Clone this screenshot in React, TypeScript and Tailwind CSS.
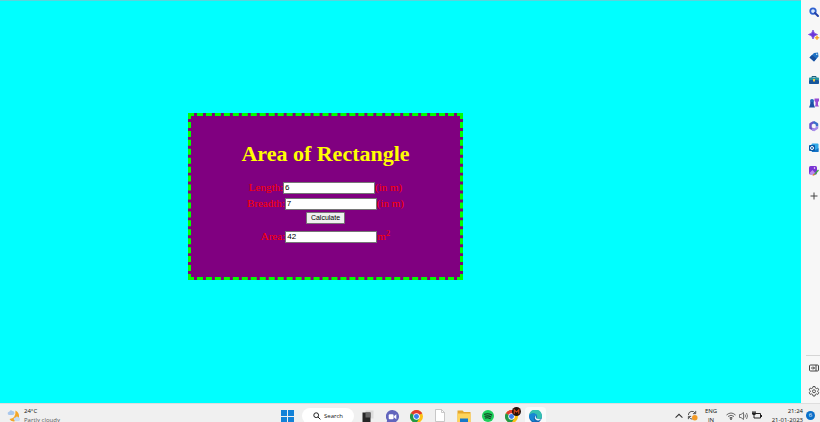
import type { FormEvent, ReactNode } from 'react';
import { useState } from 'react';

type IconProps = { children: ReactNode; label: string };

function SideButton({ children, label }: IconProps) {
  return (
    <button type="button" aria-label={label} className="flex h-[22px] w-3 items-center justify-center">
      <svg viewBox="0 0 20 20" className="size-[10px] shrink-0 overflow-visible" aria-hidden="true">
        {children}
      </svg>
    </button>
  );
}

function Sidebar() {
  return (
    <aside className="flex w-[19px] shrink-0 flex-col items-end justify-between bg-[#f7f7f7]">
      <nav className="flex flex-col gap-[3px] pt-px" aria-label="Tools">
        <div className="flex h-[181px] flex-col justify-between">
          <SideButton label="Search">
            <circle cx="8" cy="8" r="5.5" fill="#d5e6fb" stroke="#2f62cf" strokeWidth="3.500" />
            <path d="M12 12l6 6" stroke="#2342a8" strokeWidth="4" strokeLinecap="round" />
          </SideButton>
          <SideButton label="Discover">
            <path d="M8 0q1 8 9 9q-8 1-9 9q-1-8-9-9q8-1 9-9z" fill="#6b35d9" stroke="#6b35d9" strokeWidth="1.5" />
            <path d="M16 11q.6 4 4.5 4.500q-4 .6-4.500 4.500q-.6-4-4.500-4.500q4-.5 4.500-4.500z" fill="#f5a623" stroke="#f5a623" />
          </SideButton>
          <SideButton label="Shopping">
            <path d="M10 2l8-1 1 8-9 10-9-8z" fill="#1f72c4" />
            <path d="M1 11l5-5 9 7-5 6z" fill="#174f9e" />
            <circle cx="15.500" cy="4.500" r="1.500" fill="#d9efff" />
          </SideButton>
          <SideButton label="Toolbox">
            <path d="M6 6V3h8v3" fill="none" stroke="#1c5c7d" strokeWidth="2" />
            <rect x="0" y="5" width="20" height="6" rx="1.500" fill="#2694a0" />
            <rect x="0" y="10" width="20" height="8" rx="1.500" fill="#17569c" />
            <rect x="8" y="8" width="4" height="5" fill="#f0c443" />
          </SideButton>
          <SideButton label="Games">
            <circle cx="6" cy="6" r="4" fill="#2467bd" />
            <path d="M3 8h6l1 6 2 5H0l2-5z" fill="#1c4fa6" />
            <path d="M11 1h9v5l-2 2v6l2 3h-8l1-4V8l-2-2z" fill="#9a4bd3" />
          </SideButton>
          <SideButton label="Microsoft 365">
            <path d="M10 2L3 6v8l7 4" fill="none" stroke="#6a55c9" strokeWidth="5" strokeLinejoin="round" />
            <path d="M9 2l7 4v5" fill="none" stroke="#3a70c9" strokeWidth="5" strokeLinejoin="round" />
            <path d="M16 11v3l-6 4-4-2" fill="none" stroke="#a78be9" strokeWidth="5" strokeLinejoin="round" />
          </SideButton>
          <SideButton label="Outlook">
            <rect x="5" y="1" width="14" height="17" rx="2" fill="#32a9e8" />
            <path d="M6 10l7 4 6-4v8H6z" fill="#1373c7" />
            <rect x="0" y="4" width="12" height="12" rx="2" fill="#0b59a6" />
            <circle cx="6" cy="10" r="3" fill="none" stroke="#fff" strokeWidth="2" />
          </SideButton>
          <SideButton label="Image designer">
            <rect x="0" y="0" width="16" height="17" rx="3" fill="#7b35d3" />
            <path d="M1 14l6-6 7 8H3z" fill="#bb8cf0" />
            <circle cx="11" cy="4" r="1.500" fill="#fff" />
            <path d="M9 17l9-10 2 2-8 9z" fill="#42a84a" />
            <path d="M7 20l2-5 3 3z" fill="#e87b35" />
          </SideButton>
        </div>
        <SideButton label="Add">
          <path d="M10 3v14M3 10h14" stroke="#444" strokeWidth="2" />
        </SideButton>
      </nav>
      <div className="flex w-[14px] flex-col items-end gap-px border-t border-[#d5d5d5] pt-px pb-px">
        <SideButton label="Hide sidebar">
          <rect x="1" y="4" width="18" height="12" rx="2" fill="none" stroke="#444" strokeWidth="2" />
          <path d="M14 4v12M4 10h7M8 7l3 3-3 3" fill="none" stroke="#444" strokeWidth="2" />
        </SideButton>
        <SideButton label="Settings">
          <path
            d="M8 1h4l.6 3 2 1.200 3-1 2 3.500-2.300 2v1.600l2.300 2-2 3.500-3-1-2 1.200-.6 3H8l-.6-3-2-1.200-3 1-2-3.500 2.300-2V9.700l-2.300-2 2-3.500 3 1 2-1.200z"
            fill="none"
            stroke="#444"
            strokeWidth="1.800"
            strokeLinejoin="round"
          />
          <circle cx="10" cy="10.500" r="3" fill="none" stroke="#444" strokeWidth="1.800" />
        </SideButton>
      </div>
    </aside>
  );
}

function ChromeLogo() {
  return (
    <svg viewBox="0 0 24 24" className="size-[13px] shrink-0" aria-hidden="true">
      <circle cx="12" cy="12" r="12" fill="#fbc116" />
      <path d="M12 12L1.600 6A12 12 0 0 1 22.400 6z" fill="#e33b2e" />
      <path d="M1.600 6A12 12 0 0 0 12 24l5.200-9L12 12z" fill="#229a48" />
      <path d="M12 6h10.400" stroke="#e33b2e" strokeWidth="1" />
      <circle cx="12" cy="12" r="6" fill="#fff" />
      <circle cx="12" cy="12" r="4.600" fill="#3b7ded" />
    </svg>
  );
}

function Taskbar() {
  return (
    <footer className="flex h-[19px] shrink-0 items-start overflow-hidden border-t border-[#dedede] bg-[#f0f0f0] font-['Open_Sans',sans-serif] text-[6px] leading-[9px] text-[#111]">
      <button type="button" className="flex w-[281px] gap-[3px] pt-[3px] pl-[7px] text-left">
        <svg viewBox="0 0 28 28" className="mt-[2px] size-[14px]" aria-hidden="true">
          <path d="M17 3q8 4 7 13q-2 8-11 9q-6-1-8-5q13-1 12-17z" fill="#f3a629" />
          <path d="M2 11q-2-5 3-6q2-4 6-1q4 0 4 4t-4 4H4z" fill="#a9c8ed" />
          <path d="M14 22q-2-5 3-5q3-4 6 0q4 0 3 4t-4 3h-6z" fill="#c6dcf5" />
        </svg>
        <span>
          <span className="block">24°C</span>
          <span className="block text-[#555]">Partly cloudy</span>
        </span>
      </button>
      <nav className="flex items-start pt-[4px]" aria-label="Taskbar">
        <button type="button" aria-label="Start" className="pt-[2px]">
          <svg viewBox="0 0 26 26" className="size-[13px]" aria-hidden="true">
            <path d="M0 0h12v12H0zM14 0h12v12H14zM0 14h12v12H0zM14 14h12v12H14z" fill="#1382d8" />
          </svg>
        </button>
        <button type="button" className="ml-2 flex h-4 w-[52px] items-center rounded-full bg-white pl-[11px]">
          <svg viewBox="0 0 20 20" className="mr-[3px] size-[8px]" aria-hidden="true">
            <circle cx="8" cy="8" r="6" fill="none" stroke="#222" strokeWidth="2.500" />
            <path d="M12.500 12.500l6 6" stroke="#222" strokeWidth="2.500" />
          </svg>
          Search
        </button>
        <button type="button" aria-label="Task view" className="ml-2 pt-[2px]">
          <svg viewBox="0 0 24 24" className="size-[12px]" aria-hidden="true">
            <path d="M7 1h16v16H7z" fill="#dcdcdc" />
            <path d="M1 5h16v19H1z" fill="#262626" />
            <path d="M7 5h10v10H7z" fill="#666" />
          </svg>
        </button>
        <button type="button" aria-label="Chat" className="ml-3 pt-[2px]">
          <svg viewBox="0 0 24 24" className="size-[13px]" aria-hidden="true">
            <path d="M12 0a12 12 0 1 1-6 22.400L1 24l1-5A12 12 0 0 1 12 0z" fill="#6265bd" />
            <rect x="5" y="8" width="9" height="9" rx="2" fill="#fff" />
            <path d="M15 11l4-3v9l-4-3z" fill="#fff" />
          </svg>
        </button>
        <button type="button" aria-label="Chrome" className="ml-[11px] pt-[2px]">
          <ChromeLogo />
        </button>
        <button type="button" aria-label="Document" className="ml-3 pt-px">
          <svg viewBox="0 0 20 26" className="h-[13px] w-[10px]" aria-hidden="true">
            <path d="M1 1h12l6 6v18H1z" fill="#fff" stroke="#b8b8b8" strokeWidth="1.500" />
            <path d="M13 1v6h6" fill="none" stroke="#b8b8b8" strokeWidth="1.500" />
          </svg>
        </button>
        <button type="button" aria-label="File Explorer" className="ml-3 pt-[2px]">
          <svg viewBox="0 0 28 24" className="h-3 w-[14px]" aria-hidden="true">
            <path d="M1 1h10l3 3h13v20H1z" fill="#e5a72c" />
            <path d="M1 7h26v17H1z" fill="#ffd45a" />
            <path d="M6 17h16v7H6z" fill="#1679c9" />
          </svg>
        </button>
        <button type="button" aria-label="Spotify" className="ml-[11px] pt-[2px]">
          <svg viewBox="0 0 24 24" className="size-[12px]" aria-hidden="true">
            <circle cx="12" cy="12" r="12" fill="#1ed05b" />
            <path d="M5 8.500q8-2.500 14.500 1.500M6 12.500q7-2 12 1.500M7 16q5-1.500 9.500 1.200" fill="none" stroke="#14321f" strokeWidth="2.200" strokeLinecap="round" />
          </svg>
        </button>
        <button type="button" aria-label="Chrome profile" className="relative ml-[11px] pt-[2px]">
          <ChromeLogo />
          <svg viewBox="0 0 16 16" className="absolute -top-px left-[7px] size-[9px]" aria-hidden="true">
            <circle cx="8" cy="8" r="8" fill="#24100b" />
            <path d="M4 12V5l4 4 4-4v7" fill="none" stroke="#d4471f" strokeWidth="2" />
          </svg>
        </button>
        <button type="button" aria-label="Edge" className="-mt-px ml-[7px] flex h-5 w-[21px] justify-center rounded-sm bg-[#fafafa] pt-[3px]">
          <svg viewBox="0 0 24 24" className="size-[13px]" aria-hidden="true">
            <circle cx="12" cy="12" r="12" fill="#1467b3" />
            <path d="M0 11A12 12 0 0 1 24 11q0 6-6 6q-5 0-4-3q2-5-3-7Q5 5 0 11z" fill="#35c1b1" />
            <path d="M0 11Q2 5 9 6q6 1 6 6q-2-3-5 0q-3 5 1 9q-9 0-11-10z" fill="#1688d4" />
            <path d="M13 10q-4 3-1 7q4 4 9 1l3-1q-4 0-9-1q-4-2-2-6z" fill="#eef8ff" />
          </svg>
        </button>
      </nav>
      <div className="ml-auto flex items-start pt-[3px] pr-[5px]">
        <svg viewBox="0 0 14 14" className="mt-[5px] size-[8px]" aria-hidden="true">
          <path d="M1 10l6-6 6 6" fill="none" stroke="#333" strokeWidth="1.800" />
        </svg>
        <svg viewBox="0 0 24 24" className="ml-[4px] mt-[3px] size-[11px]" aria-hidden="true">
          <path d="M3 11a8 8 0 0 1 15-4M19 2v6h-6M3 20v-6h6M4 15q3 5 8 5" fill="none" stroke="#444" strokeWidth="2" />
          <circle cx="17" cy="17" r="6" fill="#f39a25" />
        </svg>
        <div className="ml-[6px] w-[14px] text-center">
          <div>ENG</div>
          <div>IN</div>
        </div>
        <svg viewBox="0 0 20 20" className="ml-[8px] mt-[4px] size-[10px]" aria-hidden="true">
          <path d="M1 8q9-8 18 0M4 11q6-5 12 0M7 14q3-3 6 0" fill="none" stroke="#555" strokeWidth="1.800" />
          <circle cx="10" cy="16" r="1.800" fill="#444" />
        </svg>
        <svg viewBox="0 0 20 20" className="ml-[3px] mt-[4px] size-[10px]" aria-hidden="true">
          <path d="M1 7h3l5-4v14l-5-4H1z" fill="none" stroke="#555" strokeWidth="1.600" />
          <path d="M12 7q2 3 0 6M15 4q4 6 0 12" fill="none" stroke="#555" strokeWidth="1.600" />
        </svg>
        <svg viewBox="0 0 20 20" className="ml-[3px] mt-[3px] size-[10px]" aria-hidden="true">
          <path d="M6 7h11v9H4v-4" fill="none" stroke="#222" strokeWidth="2" />
          <path d="M0 5h8v3l-4 4-4-4zM1 2h2v3H1zM5 2h2v3H5zM18 10h2v4h-2z" fill="#222" />
        </svg>
        <div className="ml-[7px] w-[34px] text-right whitespace-nowrap">
          <div>21:24</div>
          <div>21-01-2023</div>
        </div>
        <div className="mt-[4px] ml-[3px] size-[9px] rounded-full bg-[#0a6fc9] text-center text-[6px] text-white">6</div>
      </div>
    </footer>
  );
}

const fieldClass =
  "h-3 w-[92px] border border-[#767676] bg-white px-px font-['Liberation_Sans',Arial,sans-serif] text-[8px] text-black outline-none";

export default function App() {
  const [length, setLength] = useState('6');
  const [breadth, setBreadth] = useState('7');
  const [area, setArea] = useState('42');

  const calculate = (event: FormEvent) => {
    event.preventDefault();
    setArea(String(Number(length) * Number(breadth)));
  };

  return (
    <div className="flex h-screen flex-col overflow-hidden">
      <div className="flex min-h-0 grow">
        <main className="grow border-t border-[#5cd3dc] bg-[#00ffff] pt-28 pl-[188px]">
          <form
            onSubmit={calculate}
            className="flex w-[275px] flex-col items-center border-[3px] border-dashed border-[#00ff00] bg-[#800080] pt-[25px] pb-[33px] font-['Liberation_Serif','Times_New_Roman',serif] text-[11px] leading-[15px] text-[#ff0000]"
          >
            <h1 className="mb-[13px] text-[22px] leading-[26px] font-bold text-[#ffff00]">Area of Rectangle</h1>
            <div className="flex items-center">
              <label htmlFor="length">Length:</label>
              <input id="length" value={length} onChange={(e) => setLength(e.target.value)} className={fieldClass} />
              <span>(in m)</span>
            </div>
            <div className="mt-px flex items-center">
              <label htmlFor="breadth">Breadth:</label>
              <input id="breadth" value={breadth} onChange={(e) => setBreadth(e.target.value)} className={fieldClass} />
              <span>(in m)</span>
            </div>
            <button
              type="submit"
              className="mt-px h-3 w-[39px] rounded-[1px] border border-[#767676] bg-[#efefef] text-center font-['Liberation_Sans',Arial,sans-serif] text-[7px] leading-[10px] text-black"
            >
              Calculate
            </button>
            <div className="mt-[5px] flex items-center">
              <label htmlFor="area">Area:</label>
              <input id="area" value={area} readOnly className={fieldClass} />
              <span>
                m<sup className="text-[9px]">2</sup>
              </span>
            </div>
          </form>
        </main>
        <Sidebar />
      </div>
      <Taskbar />
    </div>
  );
}
